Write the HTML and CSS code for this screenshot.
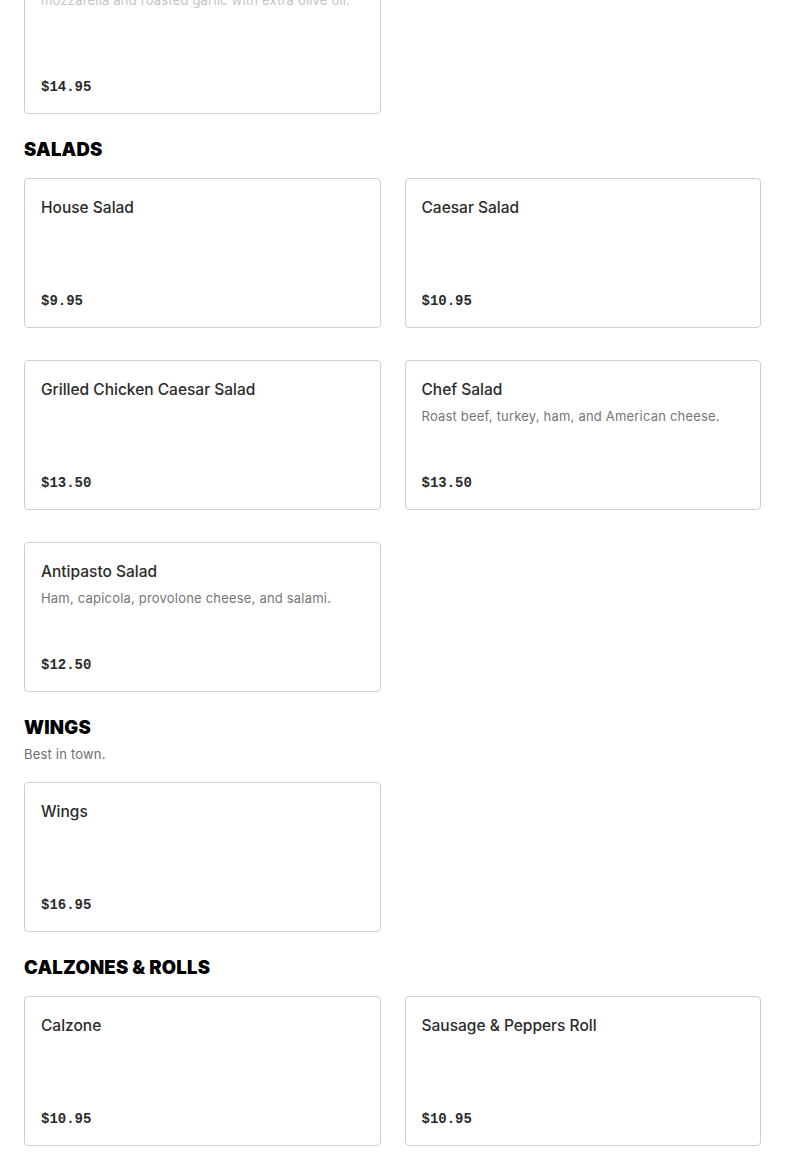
FILE: index.html
```html
<!DOCTYPE html>
<html lang="en">
<head>
    <meta charset="UTF-8">
    <meta name="viewport" content="width=device-width, initial-scale=1.0">
    <title>Menu</title>
    <link rel="stylesheet" href="styles.css">
</head>
<body>

    <div class="menu">

        <!-- Specialty pies (scrolled past) -->
        <section class="menu-section">
            <div class="item-grid">
                <div class="item item-tall">
                    <h3 class="item-name">Sausage &amp; Broccoli Rabe Pie</h3>
                    <p class="item-desc">Sweet Italian sausage, broccoli rabe, fresh mozzarella and roasted garlic with extra olive oil.</p>
                    <span class="item-price">$14.95</span>
                </div>
            </div>
        </section>

        <section class="menu-section">
            <h2 class="section-title">Salads</h2>
            <div class="item-grid">
                <div class="item">
                    <h3 class="item-name">House Salad</h3>
                    <span class="item-price">$9.95</span>
                </div>
                <div class="item">
                    <h3 class="item-name">Caesar Salad</h3>
                    <span class="item-price">$10.95</span>
                </div>
                <div class="item">
                    <h3 class="item-name">Grilled Chicken Caesar Salad</h3>
                    <span class="item-price">$13.50</span>
                </div>
                <div class="item">
                    <h3 class="item-name">Chef Salad</h3>
                    <p class="item-desc">Roast beef, turkey, ham, and American cheese.</p>
                    <span class="item-price">$13.50</span>
                </div>
                <div class="item">
                    <h3 class="item-name">Antipasto Salad</h3>
                    <p class="item-desc">Ham, capicola, provolone cheese, and salami.</p>
                    <span class="item-price">$12.50</span>
                </div>
            </div>
        </section>

        <section class="menu-section">
            <h2 class="section-title">Wings</h2>
            <p class="section-desc">Best in town.</p>
            <div class="item-grid">
                <div class="item">
                    <h3 class="item-name">Wings</h3>
                    <span class="item-price">$16.95</span>
                </div>
            </div>
        </section>

        <section class="menu-section">
            <h2 class="section-title">Calzones &amp; Rolls</h2>
            <div class="item-grid">
                <div class="item">
                    <h3 class="item-name">Calzone</h3>
                    <span class="item-price">$10.95</span>
                </div>
                <div class="item">
                    <h3 class="item-name">Sausage &amp; Peppers Roll</h3>
                    <span class="item-price">$10.95</span>
                </div>
            </div>
        </section>

    </div>

</body>
</html>
```

FILE: styles.css
```css
body {
    margin: 0;
    padding: 0;
    background-color: #fff;
    font-family: 'Inter', 'Noto Sans', sans-serif;
    color: #2b2b2b;
}

/* page is shown scrolled, first card sits partly above the fold */
.menu {
    padding: 0 24px 40px;
    margin-top: -76px;
}

.menu-section {
    margin-bottom: 23px;
}

.section-title {
    margin: 0 0 17px;
    font-size: 18.5px;
    line-height: 24px;
    font-weight: 900;
    text-transform: uppercase;
    letter-spacing: 0.2px;
    color: #000;
}

.section-desc {
    margin: -12px 0 18px;
    font-size: 13px;
    line-height: 20px;
    letter-spacing: 0.2px;
    color: #6e6e6e;
}

.item-grid {
    display: grid;
    grid-template-columns: 1fr 1fr;
    column-gap: 24px;
    row-gap: 32px;
}

.item {
    display: flex;
    flex-direction: column;
    min-height: 150px;
    box-sizing: border-box;
    padding: 17px 16px 16px;
    border: 1px solid #cfcfcf;
    border-radius: 4px;
    background: #fff;
}

.item-tall {
    min-height: 190px;
}

.item-name {
    margin: 0;
    font-size: 15.5px;
    line-height: 24px;
    font-weight: 500;
    color: #2b2b2b;
}

.item-desc {
    margin: 4px 0 0;
    font-size: 13px;
    line-height: 20px;
    letter-spacing: 0.2px;
    color: #767676;
}

.item-tall .item-desc {
    color: #c4c4c4;
}

.item-price {
    margin-top: auto;
    padding-top: 12px;
    font-family: 'Liberation Mono', monospace;
    font-size: 14px;
    line-height: 20px;
    font-weight: bold;
    color: #2b2b2b;
}
```
